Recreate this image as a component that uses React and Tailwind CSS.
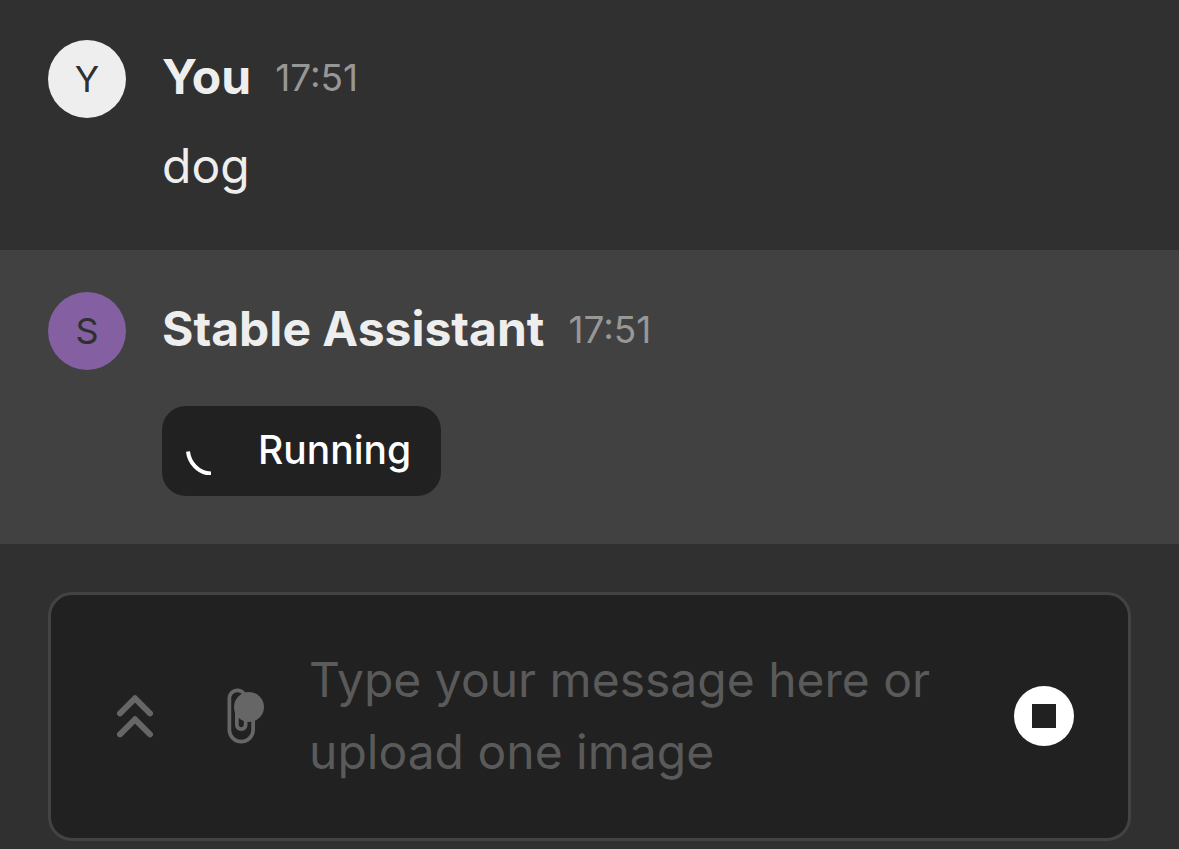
import React, { useState } from 'react';

const messages = [
  { id: 1, author: 'You', initial: 'Y', time: '17:51', text: 'dog' },
  { id: 2, author: 'Stable Assistant', initial: 'S', time: '17:51', running: true }
];

function Spinner() {
  return (
    <svg className="size-12 shrink-0" viewBox="0 0 48 48" fill="none" aria-hidden="true">
      <path d="M2 24.5C3 35 12 46.500 25 46.500" stroke="currentColor" strokeWidth="4" />
    </svg>
  );
}

function DoubleArrowUpIcon() {
  return (
    <svg
      className="size-[72px]"
      viewBox="0 0 24 24"
      fill="none"
      stroke="currentColor"
      strokeWidth="2"
      strokeLinecap="round"
      strokeLinejoin="round"
      aria-hidden="true"
    >
      <path d="M7 11.1l5-5 5 5" />
      <path d="M7 18.1l5-5 5 5" />
    </svg>
  );
}

function AttachIcon() {
  return (
    <svg className="size-[60px]" viewBox="0 0 24 24" fill="currentColor" aria-hidden="true">
      <path d="M16.5 6v11.5c0 2.21-1.79 4-4 4s-4-1.79-4-4V5c0-1.38 1.12-2.5 2.5-2.5s2.5 1.12 2.5 2.5v10.5c0 .55-.45 1-1 1s-1-.45-1-1V6H10v9.5c0 1.38 1.12 2.5 2.5 2.5s2.5-1.12 2.5-2.5V5c0-2.21-1.79-4-4-4S7 2.79 7 5v12.5c0 3.04 2.46 5.5 5.5 5.5s5.5-2.46 5.5-5.5V6z" />
    </svg>
  );
}

function Message({ message }) {
  return (
    <article
      className={`flex gap-9 px-12 pb-12 ${
        message.running ? 'bg-[#414141] pt-[42px]' : 'pt-10'
      }`}
    >
      <div
        className={`flex size-[78px] shrink-0 items-center justify-center rounded-full text-4xl text-[#303030] ${
          message.running ? 'bg-[#8460a2]' : 'bg-[#eeeeee]'
        }`}
      >
        {message.initial}
      </div>
      <div className="min-w-0 flex-1">
        <div className="flex items-center gap-6 pt-px">
          <h2 className="text-[48px] leading-[72px] font-bold">{message.author}</h2>
          <time className="pt-0.5 text-[37px] text-[#979797]">{message.time}</time>
        </div>
        {message.text && (
          <p className="mt-[17px] text-[48px] leading-[72px]">{message.text}</p>
        )}
        {message.running && (
          <button
            type="button"
            className="mt-[41px] flex h-[90px] items-center gap-6 rounded-3xl bg-[#212121] pr-[30px] pl-6 text-[39px] font-medium text-white"
          >
            <Spinner />
            <span className="pb-0.5">Running</span>
          </button>
        )}
      </div>
    </article>
  );
}

function Composer() {
  const [value, setValue] = useState('');

  return (
    <form
      className="mx-12 mt-12 mb-2 flex items-center rounded-3xl border-[3px] border-[#434343] bg-[#212121] pt-[49px] pr-[54px] pb-[50px] pl-12"
      onSubmit={e => e.preventDefault()}
    >
      <button type="button" aria-label="Show history" className="text-[#666666]">
        <DoubleArrowUpIcon />
      </button>
      <button type="button" aria-label="Upload image" className="relative ml-[39px] text-[#666666]">
        <AttachIcon />
        {/* Upload badge */}
        <span className="absolute top-[6px] right-[6px] size-[30px] rounded-full bg-[#666666]" />
      </button>
      <textarea
        rows={2}
        value={value}
        onChange={e => setValue(e.target.value)}
        aria-label="Message"
        placeholder="Type your message here or upload one image"
        className="mr-12 ml-[39px] block min-w-0 flex-1 resize-none overflow-hidden bg-transparent text-[48px] leading-[72px] outline-none placeholder:text-[#5a5a5a]"
      />
      <button
        type="button"
        aria-label="Stop"
        className="flex size-[60px] shrink-0 items-center justify-center rounded-full bg-white"
      >
        <span className="size-6 bg-[#212121]" />
      </button>
    </form>
  );
}

function App() {
  return (
    <main className="flow-root min-h-screen bg-[#303030] font-['Inter',sans-serif] text-[#eeeeee]">
      {messages.map(message => (
        <Message key={message.id} message={message} />
      ))}
      <Composer />
    </main>
  );
}

export default App;
